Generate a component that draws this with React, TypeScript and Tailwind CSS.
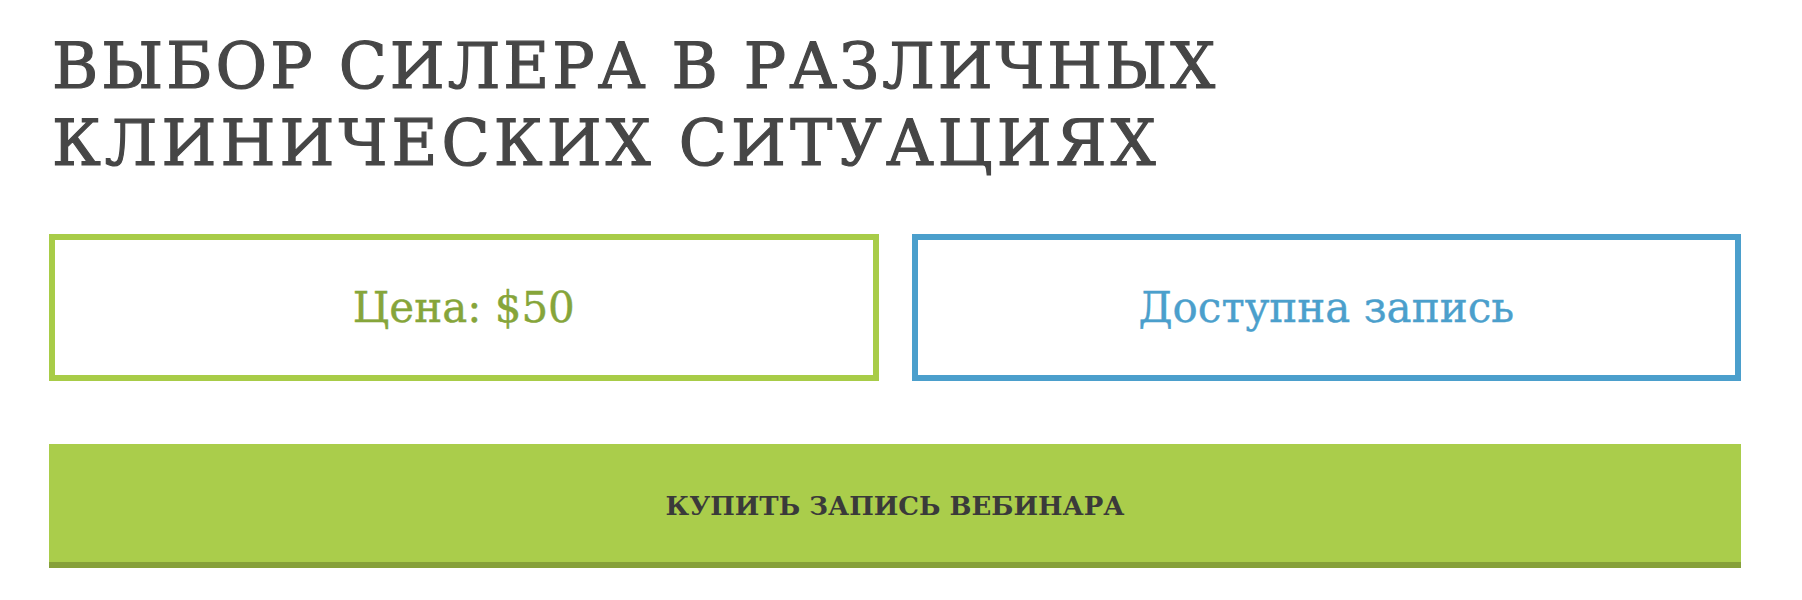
import React from "react";

const serif = { fontFamily: '"DejaVu Serif", "Liberation Serif", serif' };

export default function App() {
  return (
    <div className="min-h-[600px] bg-white pl-[49px]" style={serif}>
      <div className="w-[1692px]">
        <h1 className="pt-[28px] pl-[3px] text-[63px] leading-[77px] font-normal text-[#464646] uppercase [-webkit-text-stroke:1.2px_#464646]">
          <span className="block tracking-[3px]">Выбор силера в различных</span>
          <span className="block tracking-[4.1px]">клинических ситуациях</span>
        </h1>

        <div className="mt-[52px] grid grid-cols-2 gap-[33px]">
          <div className="flex h-[147px] items-center justify-center border-[6px] border-[#a8cc48]">
            <span className="text-[42px] text-[#86a53a] [-webkit-text-stroke:0.4px_#86a53a]">Цена: $50</span>
          </div>
          <div className="flex h-[147px] items-center justify-center border-[6px] border-[#4b9fcc]">
            <span className="text-[42px] text-[#4b9fcc] [-webkit-text-stroke:0.4px_#4b9fcc]">Доступна запись</span>
          </div>
        </div>

        <button className="mt-[63px] flex h-[124px] w-full items-center justify-center border-b-[6px] border-[#86a03a] bg-[#aacd4b] pt-[6px] pb-0">
          <span className="text-[26px] font-bold tracking-[0px] text-[#3a3a3a] uppercase">
            Купить запись вебинара
          </span>
        </button>
      </div>
    </div>
  );
}
